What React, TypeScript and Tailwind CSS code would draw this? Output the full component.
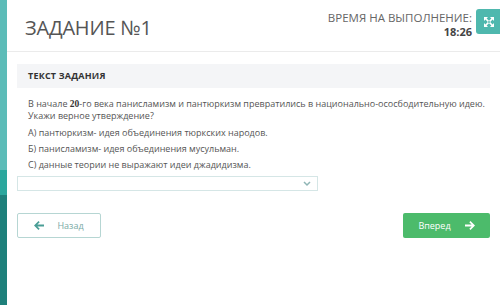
import React from 'react';

const font = { fontFamily: '"Open Sans", "Liberation Sans", sans-serif' };

function ExpandIcon() {
  return (
    <svg width="12" height="12" viewBox="0 0 12 12" fill="#fff">
      <path d="M1 1h4L3.6 2.4 6 4.8 4.8 6 2.4 3.6 1 5z" />
      <path d="M11 1v4L9.6 3.6 7.2 6 6 4.8 8.4 2.4 7 1z" />
      <path d="M1 11V7l1.4 1.4L4.8 6 6 7.2 3.6 9.6 5 11z" />
      <path d="M11 11H7l1.4-1.4L6 7.2 7.2 6l2.4 2.4L11 7z" />
    </svg>
  );
}

function ArrowLeft({ color }: { color: string }) {
  return (
    <svg width="10" height="9" viewBox="0 0 10 9" fill={color}>
      <path d="M0 4.5L4.5 0l1.2 1.2L3.4 3.5H10v2H3.4l2.3 2.3L4.5 9z" />
    </svg>
  );
}

function ArrowRight({ color }: { color: string }) {
  return (
    <svg width="10" height="9" viewBox="0 0 10 9" fill={color}>
      <path d="M10 4.5L5.5 0 4.3 1.2l2.3 2.3H0v2h6.6L4.3 7.8 5.5 9z" />
    </svg>
  );
}

export default function App() {
  return (
    <div className="w-[500px] h-[305px] flex bg-white overflow-hidden" style={font}>
      {/* sidebar strip */}
      <div className="w-[7px] shrink-0 flex flex-col">
        <div className="h-[170px] bg-[#5cbcb8]" />
        <div className="h-[25px] bg-[#2ba79d]" />
        <div className="flex-1 bg-[#1e807b]" />
      </div>

      <div className="flex-1 flex flex-col">
        {/* header */}
        <div className="h-[52px] flex items-start justify-between border-b border-[#ebebeb] pl-[18px]">
          <h1 className="mt-[16px] text-[20px] leading-[24px] text-[#555] font-normal tracking-[-0.2px]">ЗАДАНИЕ №1</h1>
          <div className="flex items-start gap-[4px] mt-[9px] -mr-[2px]">
            <div className="flex flex-col items-end text-[#666]">
              <span className="text-[11.5px] leading-[13px] mt-[2px]">ВРЕМЯ НА ВЫПОЛНЕНИЕ:</span>
              <span className="text-[11px] leading-[12px] mt-[2px] font-bold text-[#444]">18:26</span>
            </div>
            <div className="w-[26px] h-[25px] rounded-[3px] bg-[#4fb8ae] flex items-center justify-center">
              <ExpandIcon />
            </div>
          </div>
        </div>

        {/* content */}
        <div className="pl-[10px] pr-[10px] pt-[12px]">
          <div className="w-[473px] h-[24px] bg-[#f4f5f7] flex items-center pl-[11px]">
            <span className="text-[9px] font-bold text-[#333] tracking-[0.2px]">ТЕКСТ ЗАДАНИЯ</span>
          </div>

          <div className="pl-[11px] pt-[10px] text-[9px] text-[#555] leading-[11px]">
            <p>
              В начале <b className="font-bold text-[#333] text-[9.5px] leading-[11px]" style={{ fontFamily: '"Liberation Serif", serif' }}>20</b>-го века панисламизм и пантюркизм превратились в национально-ососбодительную идею.
              <br />
              Укажи верное утверждение?
            </p>
            <p className="mt-[6px]">А) пантюркизм- идея объединения тюркских народов.</p>
            <p className="mt-[5px]">Б) панисламизм- идея объединения мусульман.</p>
            <p className="mt-[5px]">С) данные теории не выражают идеи джадидизма.</p>
          </div>

          <div className="mt-[6px] w-[301px] h-[15px] border border-[#d5e6e6] flex items-center justify-end pr-[6px]">
            <svg width="8" height="6" viewBox="0 0 8 6" fill="none" stroke="#8fb5b5" strokeWidth="1.5">
              <path d="M1 1l3 3 3-3" />
            </svg>
          </div>

          <div className="mt-[22px] flex justify-between w-[473px]">
            <button className="w-[84px] h-[25px] border border-[#b6d6d3] rounded-[2px] flex items-center justify-center gap-[13px] text-[9px] text-[#7aaba6]">
              <ArrowLeft color="#4a9e96" />
              <span>Назад</span>
            </button>
            <button className="w-[87px] h-[25px] bg-[#4cbb6b] rounded-[2px] flex items-center justify-center gap-[14px] text-[9px] text-white">
              <span>Вперед</span>
              <ArrowRight color="#fff" />
            </button>
          </div>
        </div>
      </div>
    </div>
  );
}
